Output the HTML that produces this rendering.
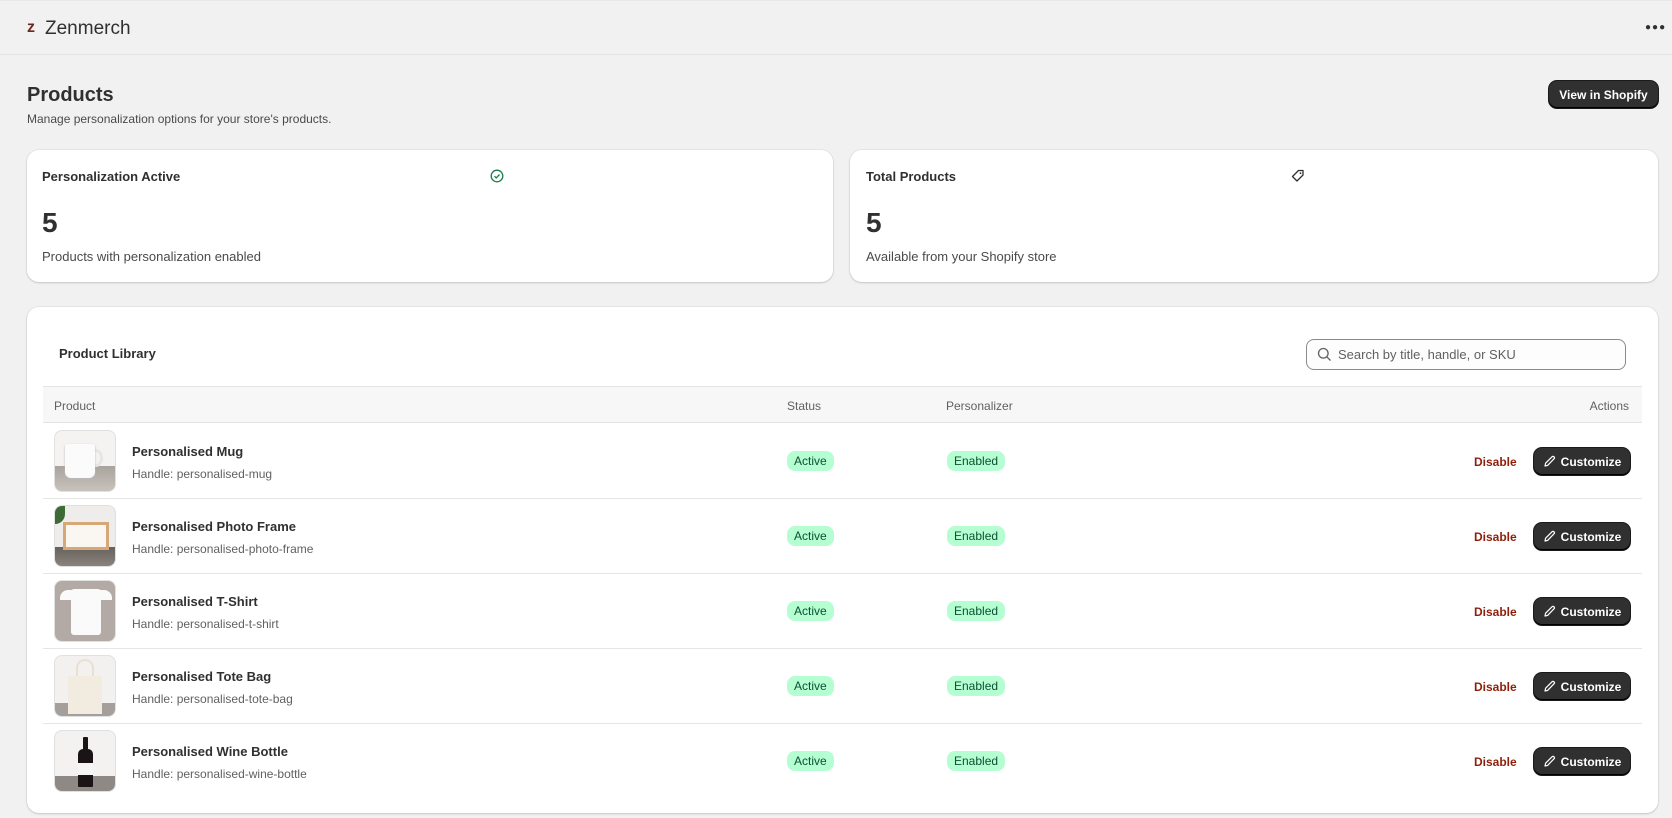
<!DOCTYPE html>
<html><head><meta charset="utf-8"><style>
*{box-sizing:border-box;margin:0;padding:0}
body{width:1672px;height:818px;background:#f1f1f1;font-family:"Liberation Sans",sans-serif;color:#303030;position:relative;overflow:hidden}
.a{position:absolute}
.hdr{left:0;top:0;width:1672px;height:55px;border-bottom:1px solid #e3e3e3;border-top:1px solid #e8e8e8}
.card{background:#fff;border-radius:12px;box-shadow:0 1px 2px rgba(0,0,0,.15),0 0 0 1px rgba(0,0,0,.04)}
.btn{background:#303030;color:#fff;font-weight:bold;font-size:12px;border-radius:8px;box-shadow:inset 0 -1px 0 #000,0 0 0 1px #1a1a1a;display:flex;align-items:center;justify-content:center;gap:5px}
.badge{background:#b4fed2;color:#0c5132;font-size:12px;border-radius:8px;height:20px;line-height:20px;padding:0 7px}
.th{font-size:12px;color:#616161}
.name{font-size:13px;font-weight:bold;color:#303030}
.hd{font-size:12px;color:#616161}
.thumb{width:62px;height:62px;border-radius:8px;border:1px solid #e0e0e0;overflow:hidden}
.dis{color:#8e1f0b;font-size:12px;font-weight:bold}
</style></head><body>
<div class="a hdr"></div>
<div class="a" style="left:27px;top:19px;width:12px;height:16px;color:#6b2a1e;font-weight:bold;font-size:16px;font-family:'Liberation Sans',sans-serif">z</div>
<div class="a" style="left:45px;top:18px;font-size:19px;color:#303030">Zenmerch</div>
<div class="a" style="left:1645px;top:22px;font-size:10px;letter-spacing:1px;color:#303030">●●●</div>

<div class="a" style="left:27px;top:84px;font-size:20px;font-weight:bold;color:#303030">Products</div>
<div class="a" style="left:27px;top:112px;font-size:12px;color:#4a4a4a">Manage personalization options for your store's products.</div>
<div class="a btn" style="left:1549px;top:81px;width:109px;height:27px">View in Shopify</div>

<div class="a card" style="left:27px;top:150px;width:806px;height:132px"></div>
<div class="a" style="left:42px;top:169px;font-size:13px;font-weight:bold">Personalization Active</div>
<svg class="a" style="left:490px;top:169px" width="14" height="14" viewBox="0 0 14 14"><circle cx="7" cy="7" r="5.8" fill="none" stroke="#1a7f4e" stroke-width="1.3"/><path d="M4.5 7.2l1.7 1.7 3.3-3.4" fill="none" stroke="#1a7f4e" stroke-width="1.3"/></svg>
<div class="a" style="left:42px;top:207px;font-size:28px;font-weight:bold">5</div>
<div class="a" style="left:42px;top:249px;font-size:13px;color:#4a4a4a">Products with personalization enabled</div>

<div class="a card" style="left:850px;top:150px;width:808px;height:132px"></div>
<div class="a" style="left:866px;top:169px;font-size:13px;font-weight:bold">Total Products</div>
<svg class="a" style="left:1291px;top:169px" width="14" height="14" viewBox="0 0 14 14"><path d="M7.5 1.5h4.5v4.5l-6 6-4.5-4.5z" fill="none" stroke="#303030" stroke-width="1.3" stroke-linejoin="round"/><circle cx="9.5" cy="4.2" r=".9" fill="#303030"/></svg>
<div class="a" style="left:866px;top:207px;font-size:28px;font-weight:bold">5</div>
<div class="a" style="left:866px;top:249px;font-size:13px;color:#4a4a4a">Available from your Shopify store</div>

<div class="a card" style="left:27px;top:307px;width:1631px;height:506px"></div>
<div class="a" style="left:59px;top:346px;font-size:13px;font-weight:bold">Product Library</div>
<div class="a" style="left:1306px;top:339px;width:320px;height:31px;border:1px solid #8a8a8a;border-radius:8px;background:#fdfdfd"></div>
<svg class="a" style="left:1317px;top:347px" width="15" height="15" viewBox="0 0 15 15"><circle cx="6.3" cy="6.3" r="4.8" fill="none" stroke="#616161" stroke-width="1.3"/><path d="M9.8 9.8l3.7 3.7" stroke="#616161" stroke-width="1.3"/></svg>
<div class="a" style="left:1338px;top:347px;font-size:13px;color:#616161">Search by title, handle, or SKU</div>

<div class="a" style="left:43px;top:386px;width:1599px;height:37px;background:#f7f7f7;border-top:1px solid #e3e3e3;border-bottom:1px solid #e3e3e3"></div>
<div class="a th" style="left:54px;top:399px">Product</div>
<div class="a th" style="left:787px;top:399px">Status</div>
<div class="a th" style="left:946px;top:399px">Personalizer</div>
<div class="a th" style="left:1580px;top:399px;width:49px;text-align:right">Actions</div>

<div class="a" style="left:43px;top:498px;width:1599px;border-top:1px solid #e6e6e6"></div>
<div class="a" style="left:43px;top:573px;width:1599px;border-top:1px solid #e6e6e6"></div>
<div class="a" style="left:43px;top:648px;width:1599px;border-top:1px solid #e6e6e6"></div>
<div class="a" style="left:43px;top:723px;width:1599px;border-top:1px solid #e6e6e6"></div>

<!-- mug -->
<div class="a thumb" style="left:54px;top:430px;background:linear-gradient(#f4f3f2 0 58%,#a9a29d 58%,#c8c2bd)"><div class="a" style="left:34px;top:18px;width:14px;height:18px;border:3px solid #e6e6e6;border-radius:50%"></div><div class="a" style="left:10px;top:13px;width:30px;height:34px;background:#fbfbfb;border-radius:2px 2px 6px 6px;box-shadow:0 1px 2px #bbb"></div></div>
<!-- frame -->
<div class="a thumb" style="left:54px;top:505px;background:linear-gradient(#efedeb 0 68%,#67605b 68%,#8a837d)"><div class="a" style="left:8px;top:16px;width:46px;height:28px;border:3px solid #d6a878;background:#faf7f2"></div><div class="a" style="left:0;top:0;width:10px;height:18px;background:#3d6b35;border-radius:0 0 10px 0"></div></div>
<!-- tshirt -->
<div class="a thumb" style="left:54px;top:580px;background:#b3aaa5"><div class="a" style="left:16px;top:8px;width:30px;height:46px;background:#fafafa;border-radius:3px"></div><div class="a" style="left:5px;top:9px;width:52px;height:10px;background:#fafafa;border-radius:8px 8px 0 0;transform:skewY(0)"></div></div>
<!-- tote -->
<div class="a thumb" style="left:54px;top:655px;background:linear-gradient(#f3f1f0 0 78%,#a59f9b 78%)"><div class="a" style="left:21px;top:3px;width:18px;height:24px;border:2px solid #e8e0d2;border-bottom:none;border-radius:9px 9px 0 0"></div><div class="a" style="left:13px;top:20px;width:34px;height:38px;background:#f1ebe0"></div></div>
<!-- wine -->
<div class="a thumb" style="left:54px;top:730px;background:linear-gradient(#f3f2f1 0 75%,#8f8985 75%)"><div class="a" style="left:28px;top:6px;width:5px;height:18px;background:#1a1416;border-radius:1px"></div><div class="a" style="left:23px;top:18px;width:15px;height:38px;background:#1a1416;border-radius:5px 5px 1px 1px"></div><div class="a" style="left:23px;top:32px;width:15px;height:12px;background:#f5f5f5"></div></div>

<div class="a name" style="left:132px;top:444px">Personalised Mug</div>
<div class="a hd" style="left:132px;top:467px">Handle: personalised-mug</div>
<div class="a name" style="left:132px;top:519px">Personalised Photo Frame</div>
<div class="a hd" style="left:132px;top:542px">Handle: personalised-photo-frame</div>
<div class="a name" style="left:132px;top:594px">Personalised T-Shirt</div>
<div class="a hd" style="left:132px;top:617px">Handle: personalised-t-shirt</div>
<div class="a name" style="left:132px;top:669px">Personalised Tote Bag</div>
<div class="a hd" style="left:132px;top:692px">Handle: personalised-tote-bag</div>
<div class="a name" style="left:132px;top:744px">Personalised Wine Bottle</div>
<div class="a hd" style="left:132px;top:767px">Handle: personalised-wine-bottle</div>

<div class="a badge" style="left:787px;top:451px">Active</div><div class="a badge" style="left:947px;top:451px">Enabled</div>
<div class="a badge" style="left:787px;top:526px">Active</div><div class="a badge" style="left:947px;top:526px">Enabled</div>
<div class="a badge" style="left:787px;top:601px">Active</div><div class="a badge" style="left:947px;top:601px">Enabled</div>
<div class="a badge" style="left:787px;top:676px">Active</div><div class="a badge" style="left:947px;top:676px">Enabled</div>
<div class="a badge" style="left:787px;top:751px">Active</div><div class="a badge" style="left:947px;top:751px">Enabled</div>

<div class="a dis" style="left:1474px;top:455px">Disable</div>
<div class="a dis" style="left:1474px;top:530px">Disable</div>
<div class="a dis" style="left:1474px;top:605px">Disable</div>
<div class="a dis" style="left:1474px;top:680px">Disable</div>
<div class="a dis" style="left:1474px;top:755px">Disable</div>

<div class="a btn" style="left:1534px;top:448px;width:96px;height:27px"><svg width="13" height="13" viewBox="0 0 13 13"><path d="M2 11l.6-2.8L9 1.8a1.4 1.4 0 012 2L4.6 10.4z" fill="none" stroke="#fff" stroke-width="1.2" stroke-linejoin="round"/></svg>Customize</div>
<div class="a btn" style="left:1534px;top:523px;width:96px;height:27px"><svg width="13" height="13" viewBox="0 0 13 13"><path d="M2 11l.6-2.8L9 1.8a1.4 1.4 0 012 2L4.6 10.4z" fill="none" stroke="#fff" stroke-width="1.2" stroke-linejoin="round"/></svg>Customize</div>
<div class="a btn" style="left:1534px;top:598px;width:96px;height:27px"><svg width="13" height="13" viewBox="0 0 13 13"><path d="M2 11l.6-2.8L9 1.8a1.4 1.4 0 012 2L4.6 10.4z" fill="none" stroke="#fff" stroke-width="1.2" stroke-linejoin="round"/></svg>Customize</div>
<div class="a btn" style="left:1534px;top:673px;width:96px;height:27px"><svg width="13" height="13" viewBox="0 0 13 13"><path d="M2 11l.6-2.8L9 1.8a1.4 1.4 0 012 2L4.6 10.4z" fill="none" stroke="#fff" stroke-width="1.2" stroke-linejoin="round"/></svg>Customize</div>
<div class="a btn" style="left:1534px;top:748px;width:96px;height:27px"><svg width="13" height="13" viewBox="0 0 13 13"><path d="M2 11l.6-2.8L9 1.8a1.4 1.4 0 012 2L4.6 10.4z" fill="none" stroke="#fff" stroke-width="1.2" stroke-linejoin="round"/></svg>Customize</div>
</body></html>
